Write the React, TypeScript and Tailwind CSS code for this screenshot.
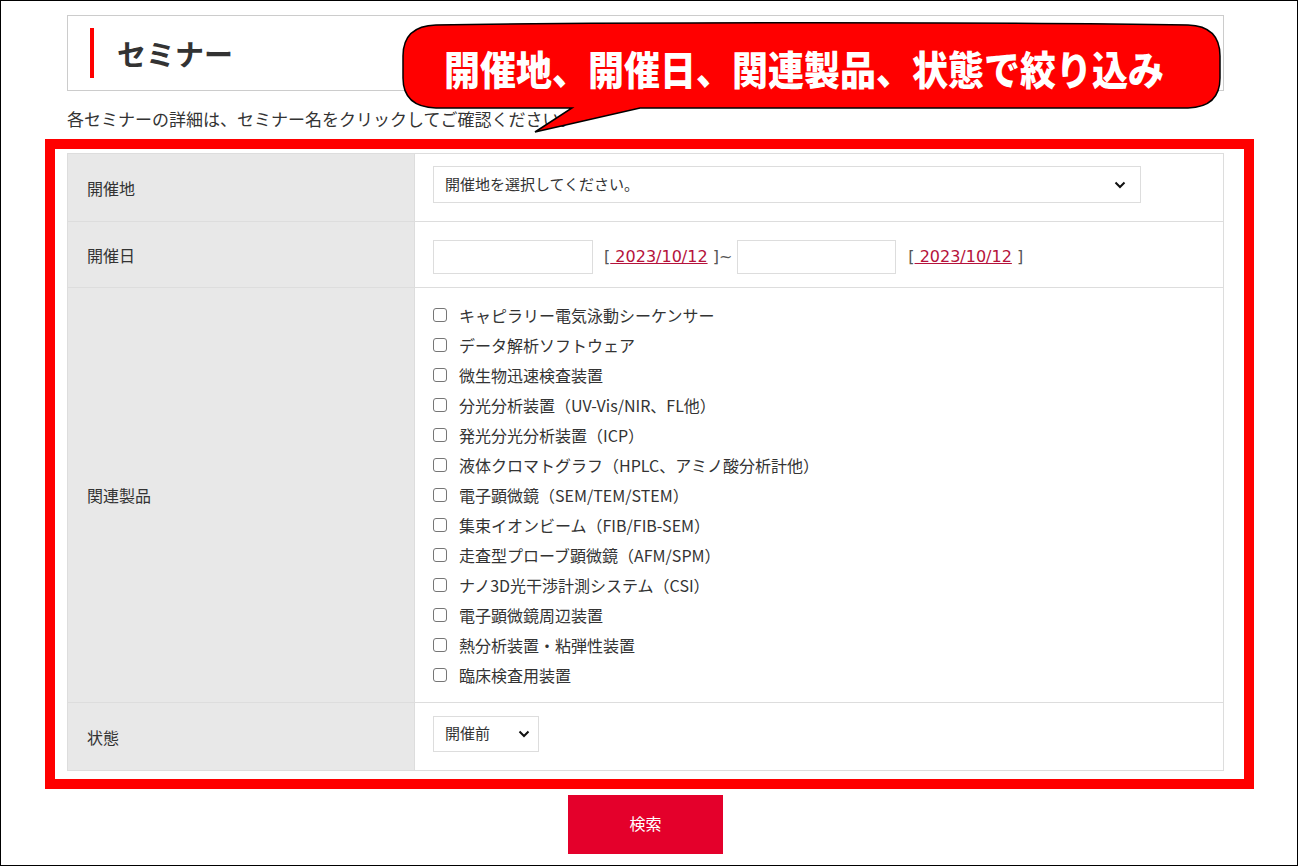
import React from "react";

const items = [
  "キャピラリー電気泳動シーケンサー",
  "データ解析ソフトウェア",
  "微生物迅速検査装置",
  "分光分析装置（UV-Vis/NIR、FL他）",
  "発光分光分析装置（ICP）",
  "液体クロマトグラフ（HPLC、アミノ酸分析計他）",
  "電子顕微鏡（SEM/TEM/STEM）",
  "集束イオンビーム（FIB/FIB-SEM）",
  "走査型プローブ顕微鏡（AFM/SPM）",
  "ナノ3D光干渉計測システム（CSI）",
  "電子顕微鏡周辺装置",
  "熱分析装置・粘弾性装置",
  "臨床検査用装置",
];

function Chevron() {
  return (
    <svg width="12" height="8" viewBox="0 0 12 8" className="shrink-0">
      <path d="M1.5 1.5 L6 6 L10.5 1.5" fill="none" stroke="#111" strokeWidth="2" />
    </svg>
  );
}

function Label({ children }: { children: React.ReactNode }) {
  return (
    <div className="w-[347px] shrink-0 bg-[#e8e8e8] border-r border-[#dddddd] flex items-center pl-[19px] text-[16px] text-[#333]">
      {children}
    </div>
  );
}

const latin = { fontFamily: '"DejaVu Sans", "Noto Sans CJK JP", sans-serif' };

export default function App() {
  return (
    <div
      className="relative w-[1300px] h-[867px] bg-white overflow-hidden"
      style={{ fontFamily: '"Noto Sans CJK JP", "Noto Sans", sans-serif' }}
    >
      <div className="absolute inset-0 w-[1298px] h-[866px] border border-black pointer-events-none z-30" />
      <div className="pl-[67px] pt-[15px] w-[1224px] text-[#333]">
        {/* header */}
        <div className="h-[76px] border border-[#cccccc] flex items-center pl-[22px]">
          <div className="w-[4px] h-[50px] bg-[#ff0000]" />
          <div className="ml-[23px] text-[29px] font-bold text-[#333] leading-none">セミナー</div>
        </div>
        <p className="mt-[15px] text-[17px] leading-[26px] whitespace-nowrap">
          各セミナーの詳細は、セミナー名をクリックしてご確認ください。
        </p>

        {/* table */}
        <div className="mt-[21px] w-[1157px] border border-[#dddddd]">
          <div className="flex h-[68px] border-b border-[#dddddd]">
            <Label>開催地</Label>
            <div className="flex-1 flex items-center pl-[18px] pb-[6px]">
              <div className="w-[708px] h-[37px] border border-[#dddddd] flex items-center justify-between pl-[11px] pr-[14px] text-[15px]">
                <span>開催地を選択してください。</span>
                <Chevron />
              </div>
            </div>
          </div>
          <div className="flex h-[66px] border-b border-[#dddddd]">
            <Label>開催日</Label>
            <div className="flex-1 flex items-center pl-[18px] pt-[4px] text-[16px] whitespace-pre" style={latin}>
              <div className="w-[160px] h-[34px] border border-[#dddddd]" />
              <span className="ml-[11px] text-[#555]">[</span>
              <span className="text-[#b5123b] underline"> 2023/10/12</span>
              <span className="text-[#555]"> ]~</span>
              <div className="w-[159px] h-[34px] border border-[#dddddd] ml-[5px]" />
              <span className="ml-[12px] text-[#555]">[</span>
              <span className="text-[#b5123b] underline"> 2023/10/12</span>
              <span className="text-[#555]"> ]</span>
            </div>
          </div>
          <div className="flex h-[415px] border-b border-[#dddddd]">
            <Label>関連製品</Label>
            <div className="flex-1 pl-[18px] pt-[12px]">
              {items.map((t) => (
                <div key={t} className="h-[30px] flex items-center">
                  <span className="w-[14px] h-[14px] rounded-[3px] border border-[#767676] bg-white shrink-0" />
                  <span className="ml-[12px] text-[16px] text-[#333] whitespace-nowrap">{t}</span>
                </div>
              ))}
            </div>
          </div>
          <div className="flex h-[67px]">
            <Label>状態</Label>
            <div className="flex-1 flex items-center pl-[18px] pb-[6px]">
              <div className="w-[106px] h-[36px] border border-[#dddddd] flex items-center justify-between pl-[11px] pr-[8px] text-[15px]">
                <span>開催前</span>
                <Chevron />
              </div>
            </div>
          </div>
        </div>

        <div className="mt-[24px] flex justify-center w-[1157px]">
          <button className="w-[155px] h-[59px] bg-[#e4002b] text-white text-[16px] flex items-center justify-center pb-[3px]">
            検索
          </button>
        </div>
      </div>

      {/* annotation: red frame */}
      <div className="absolute left-[45px] top-[139px] w-[1209px] h-[650px] border-[10px] border-[#ff0000] pointer-events-none" />

      {/* annotation: callout */}
      <svg className="absolute left-[400px] top-[20px]" width="830" height="120" viewBox="0 0 830 120">
        <path
          d="M 36,5 C 200,2 620,2 788,5 Q 820,6 820,36 V 58 Q 820,87 788,88 H 240 L 135,112 L 172,88 H 36 Q 3,87 3,58 V 36 Q 3,6 36,5 Z"
          fill="#ff0000"
          stroke="#000"
          strokeWidth="1.5"
        />
      </svg>
      <div className="absolute left-[403px] top-[25px] w-[802px] h-[83px] flex items-center justify-center text-white text-[36px] font-black leading-none whitespace-nowrap">
        <span className="inline-block scale-y-110">開催地、開催日、関連製品、状態で絞り込み</span>
      </div>
    </div>
  );
}
